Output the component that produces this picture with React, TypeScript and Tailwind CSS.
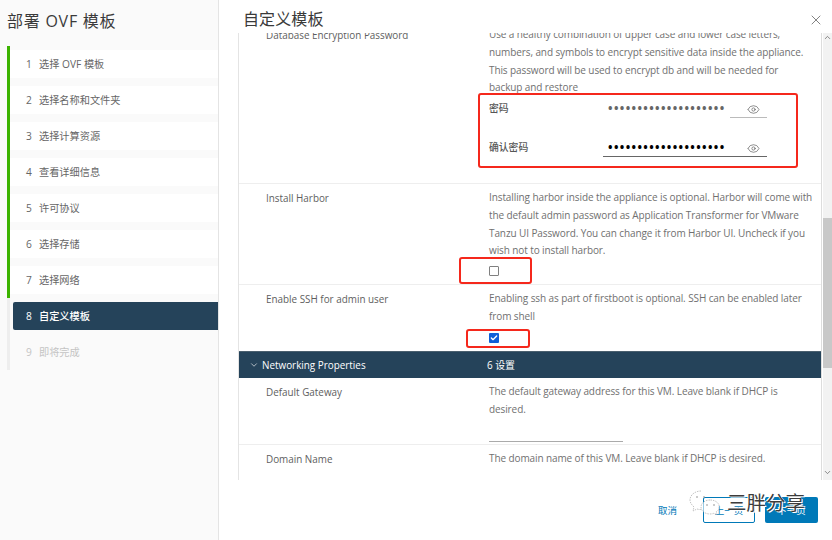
import { Eye, Check, ChevronDown, ChevronUp, X } from "lucide-react";

const steps = ["选择 OVF 模板", "选择名称和文件夹", "选择计算资源", "查看详细信息", "许可协议", "选择存储", "选择网络"];

function Desc({ lines }: { lines: string[] }) {
  return (
    <div className="text-[10px] leading-[17.8px] tracking-[-0.1px] text-[#707070]">
      {lines.map((l) => (
        <div key={l} className="whitespace-nowrap">{l}</div>
      ))}
    </div>
  );
}

function Label({ text }: { text: string }) {
  return <div className="w-[223px] shrink-0 text-[9.9px] leading-[18px] font-medium text-[#5e5e5e]">{text}</div>;
}

function Pw({ label, dark, wide }: { label: string; dark?: boolean; wide?: boolean }) {
  return (
    <div className="flex h-[40px] items-center">
      <div className="w-[114px] text-[9.8px] font-medium text-[#565656]">{label}</div>
      <div className="relative flex h-[18px] w-[164px] items-center justify-end">
        <span className={`absolute left-[5px] top-0 text-[12px] font-bold leading-[18px] tracking-[1.37px] ${dark ? "text-black" : "text-[#666]"}`}>
          ••••••••••••••••••••
        </span>
        <Eye size={13} strokeWidth={1.2} className="mr-[7px] text-[#555]" />
        <div className={`absolute bottom-0 right-0 h-px ${wide ? "w-full bg-[#666]" : "w-[37px] bg-[#bbb]"}`} />
      </div>
    </div>
  );
}

export default function App() {
  return (
    <div className="relative flex h-[540px] w-[832px] overflow-hidden bg-white font-['Open_Sans','Noto_Sans_CJK_SC',sans-serif]">
      <aside className="h-full w-[219px] shrink-0 border-r border-[#e4e4e4] bg-[#fafafa] pl-[7px]">
        <h1 className="h-[46px] pt-[9px] text-[16px] leading-[24px] tracking-[0.75px] text-[#3a3a3a]">部署 OVF 模板</h1>
        <div>
          {steps.map((s, i) => (
            <div key={s} className="h-[36px] border-l-[3px] border-[#3cb300] py-[4px]">
              <div className="flex h-[28px] items-center bg-white pl-[16px] pt-[1px] text-[10.2px] text-[#666]">
                <span className="w-[13px]">{i + 1}</span>
                <span>{s}</span>
              </div>
            </div>
          ))}
          <div className="h-[36px] border-l-[3px] border-[#eeeeee] py-[4px] pl-[3px]">
            <div className="flex h-[28px] items-center rounded-l-[2px] bg-[#25435a] pl-[13px] pt-[1px] text-[10.2px] font-medium text-white">
              <span className="w-[13px]">8</span>
              <span>自定义模板</span>
            </div>
          </div>
          <div className="h-[36px] border-l-[3px] border-[#eeeeee] py-[4px]">
            <div className="flex h-[28px] items-center pl-[16px] pt-[1px] text-[10.2px] text-[#c4c4c4]">
              <span className="w-[13px]">9</span>
              <span>即将完成</span>
            </div>
          </div>
        </div>
      </aside>

      <main className="flex min-w-0 flex-1 flex-col">
        <header className="flex h-[33px] shrink-0 items-start justify-between pl-[24px] pr-[8px]">
          <h2 className="pt-[7px] text-[16px] leading-[24px] tracking-[0.1px] text-[#3a3a3a]">自定义模板</h2>
          <X size={16} strokeWidth={1} className="mt-[12px] text-[#444]" />
        </header>

        <div className="ml-[19px] flex h-[447px] shrink-0 border-l border-[#e4e4e4]">
          <div className="min-w-0 flex-1 overflow-hidden border-r border-[#ddd]">
            <div className="-mt-[7px]">
              <section className="h-[158px] border-b border-[#eee] pl-[27px]">
                <div className="flex">
                  <Label text="Database Encryption Password" />
                  <div>
                    <Desc lines={["Use a healthy combination of upper case and lower case letters,", "numbers, and symbols to encrypt sensitive data inside the appliance.", "This password will be used to encrypt db and will be needed for", "backup and restore"]} />
                    <div className="-mt-[8px]">
                      <Pw label="密码" />
                      <div className="-mt-px"><Pw label="确认密码" dark wide /></div>
                    </div>
                  </div>
                </div>
              </section>
              <section className="h-[101px] border-b border-[#eee] pl-[27px] pt-[5px]">
                <div className="flex">
                  <Label text="Install Harbor" />
                  <div>
                    <Desc lines={["Installing harbor inside the appliance is optional. Harbor will come with", "the default admin password as Application Transformer for VMware", "Tanzu UI Password. You can change it from Harbor UI. Uncheck if you", "wish not to install harbor."]} />
                    <div className="mt-[6px] h-[10px] w-[10px] rounded-[1px] border border-[#808080] bg-white" />
                  </div>
                </div>
              </section>
              <section className="h-[66px] pl-[27px] pt-[5px]">
                <div className="flex">
                  <Label text="Enable SSH for admin user" />
                  <div>
                    <Desc lines={["Enabling ssh as part of firstboot is optional. SSH can be enabled later", "from shell"]} />
                    <div className="mt-[7px] flex h-[10px] w-[10px] items-center justify-center rounded-[1px] bg-[#0f5fd8]">
                      <Check size={8} strokeWidth={4} className="text-white" />
                    </div>
                  </div>
                </div>
              </section>
              <section className="flex h-[27px] items-center border-t border-[#4a5f6e] bg-[#25435a] text-[9.9px] font-medium text-white">
                <ChevronDown size={10} strokeWidth={1.5} className="ml-[9px] w-[12px]" />
                <span className="ml-[2px] w-[225px]">Networking Properties</span>
                <span className="font-normal">6 设置</span>
              </section>
              <section className="h-[67px] border-b border-[#eee] pl-[27px] pt-[5px]">
                <div className="flex">
                  <Label text="Default Gateway" />
                  <div>
                    <Desc lines={["The default gateway address for this VM. Leave blank if DHCP is", "desired."]} />
                    <div className="mt-[12px] h-[11px] w-[134px] border-b border-[#aaa]" />
                  </div>
                </div>
              </section>
              <section className="pl-[27px] pt-[5px]">
                <div className="flex">
                  <Label text="Domain Name" />
                  <Desc lines={["The domain name of this VM. Leave blank if DHCP is desired."]} />
                </div>
              </section>
            </div>
          </div>
          <div className="ml-px flex w-[9px] shrink-0 flex-col bg-[#f2f2f2]">
            <ChevronUp size={9} strokeWidth={2} className="text-[#666]" />
            <div className="mt-[176px] h-[150px] w-full bg-[#c8c8c8]" />
            <ChevronDown size={9} strokeWidth={2} className="mt-auto mb-[3px] text-[#666]" />
          </div>
        </div>

        <footer className="flex flex-1 items-start justify-end pr-[14px] pt-[17px] text-[9.5px]">
          <button className="mr-[26px] flex h-[26px] items-center pt-[2px] text-[#0079b8]">取消</button>
          <button className="mr-[10px] flex h-[26px] w-[52px] items-center justify-center rounded-[2px] border border-[#0079b8] pt-[2px] text-[#0079b8]">上一页</button>
          <button className="flex h-[26px] w-[53px] items-center justify-center rounded-[2px] bg-[#0079b8] pt-[2px] text-white">下一页</button>
        </footer>
      </main>

      {/* red annotation boxes */}
      <div className="absolute left-[478px] top-[93px] h-[75px] w-[320px] rounded-[3px] border-2 border-[#f5281c]" />
      <div className="absolute left-[459px] top-[257px] h-[27px] w-[73px] rounded-[3px] border-2 border-[#f5281c]" />
      <div className="absolute left-[466px] top-[329px] h-[19px] w-[64px] rounded-[3px] border-2 border-[#f5281c]" />

      {/* watermark */}
      <div className="absolute left-[687px] top-[490px] flex items-center">
        <svg width="36" height="26" viewBox="0 0 36 26" fill="none" stroke="#9a9a9a" strokeWidth="0.6" strokeDasharray="1.5 1">
          <path d="M14 1c-6 0-11 4-11 9 0 3 2 5 4 7l-1 4 4-2c2 .6 3 .6 5 .4" />
          <path d="M23 10c-5 0-9 3-9 7s4 7 9 7c1.500 0 3-.3 4-.8l3 1.600-.7-3c2-1.300 3-3 3-4.800 0-4-4-7-9-7z" fill="#ffffff" fillOpacity="0.6" />
          <circle cx="10" cy="7" r="0.8" fill="#888" stroke="none" />
          <circle cx="17" cy="7" r="0.8" fill="#888" stroke="none" />
          <circle cx="20" cy="15" r="0.8" fill="#888" stroke="none" />
          <circle cx="27" cy="15" r="0.8" fill="#888" stroke="none" />
        </svg>
        <span className="ml-[4px] text-[19.5px] leading-[26px] text-[#3c3c3c] [text-shadow:0_0_1px_#fff,1px_1px_0_#fff,-1px_-1px_0_#fff]">三胖分享</span>
      </div>
    </div>
  );
}
